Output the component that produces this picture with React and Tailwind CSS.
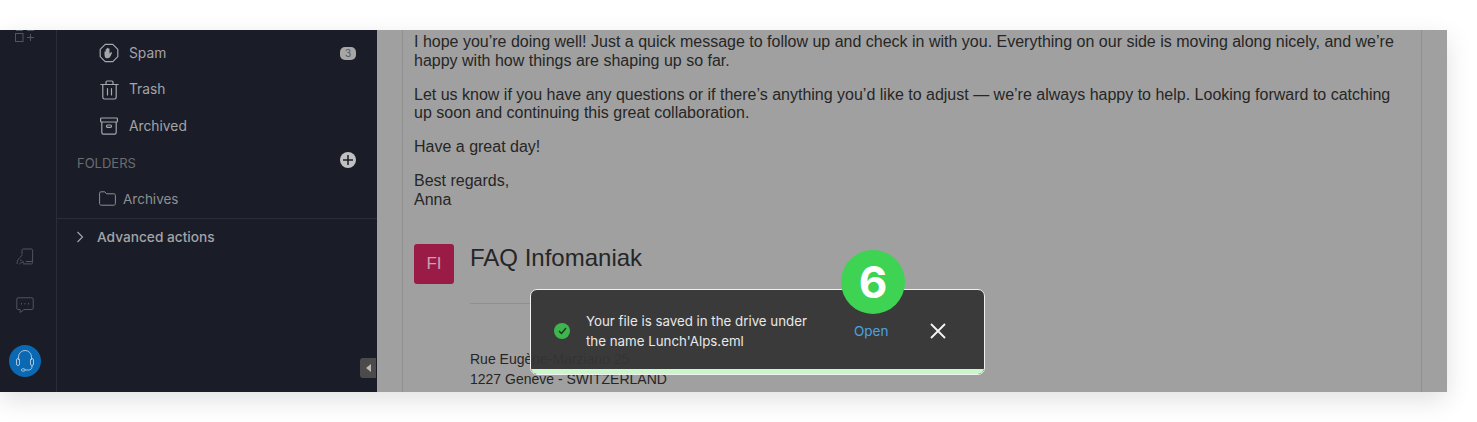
import React from 'react';

const SpamIcon = () => (
    <svg width="20" height="20" viewBox="0 0 20 20" fill="none" stroke="currentColor" strokeWidth="1.200">
        <path d="M6.200 1.300h7.600l5 5v7.400l-5 5H6.200l-5-5V6.300z" strokeLinejoin="round" />
        <path d="M5.500 9c0-.9 1.200-.9 1.200 0v1.500V6.300c0-.9 1.200-.9 1.200 0v3.700V5.400c0-.9 1.300-.9 1.300 0V10V5.800c0-.9 1.300-.9 1.300 0v5l1.100-1.300c.7-.8 1.800-.1 1.300.8l-1.400 3c-.6 1.300-1.500 2-3 2-2.100 0-3-1.500-3-3.400z" fill="currentColor" stroke="none" />
    </svg>
);

const TrashIcon = () => (
    <svg width="19" height="20" viewBox="0 0 19 20" fill="none" stroke="currentColor" strokeWidth="1.200" strokeLinecap="round" strokeLinejoin="round">
        <path d="M.8 4.500h17.400M6 4.500V2.200C6 1.500 6.500 1 7.200 1h4.600c.7 0 1.200.5 1.200 1.200v2.300" />
        <path d="M2.800 4.500v12.800c0 1 .7 1.700 1.700 1.700h10c1 0 1.700-.7 1.700-1.700V4.500" />
        <path d="M7.500 8.500v6.500M11.500 8.500v6.500" />
    </svg>
);

const ArchiveIcon = () => (
    <svg width="18" height="18" viewBox="0 0 18 18" fill="none" stroke="currentColor" strokeWidth="1.200" strokeLinejoin="round">
        <rect x="0.600" y="1" width="16.800" height="4" rx="0.800" />
        <path d="M1.800 5v10.600c0 1 .6 1.600 1.600 1.600h11.200c1 0 1.600-.6 1.600-1.600V5" />
        <rect x="6.500" y="8" width="5" height="2.400" rx="1.200" />
    </svg>
);

const FolderIcon = () => (
    <svg width="17" height="15" viewBox="0 0 17 15" fill="none" stroke="currentColor" strokeWidth="1" strokeLinejoin="round">
        <path d="M.6 2.200C.6 1.300 1.200.8 2 .8h3.800l1.700 2h7.300c.9 0 1.600.6 1.600 1.500v8.300c0 .9-.7 1.600-1.600 1.600H2.200c-.9 0-1.600-.7-1.600-1.600z" />
    </svg>
);

const MenuItem = ({ icon, label, badge }) => (
    <div className="flex items-center h-[36.500px]">
        <div className="w-[72px] flex justify-end pr-[10px] shrink-0 text-[#a6a7ab]">
            <div className="w-5 flex justify-center">{icon}</div>
        </div>
        <span className="text-[13.800px] text-[#a3a4a8]">{label}</span>
        {badge && (
            <span className="ml-auto mr-[21px] w-4 h-[13px] rounded-[5px] bg-[#a6a6a6] text-[#55565c] text-[10px] leading-[13px] text-center">
                {badge}
            </span>
        )}
    </div>
);

const Rail = () => (
    <aside className="w-[57px] shrink-0 border-r border-[#2a2d38] flex flex-col items-center pr-[7px] text-[#4e5661] overflow-hidden">
        <svg className="mt-[-6px]" width="20" height="20" viewBox="0 0 20 20" fill="none" stroke="currentColor" strokeWidth="1">
            <path d="M1 6.500H8M12 6.500h7" />
            <rect x="0.500" y="9.500" width="7.500" height="8" />
            <path d="M12 13.500h7M15.500 10v7" />
        </svg>
        <div className="mt-auto flex flex-col items-center">
            <svg width="18" height="18" viewBox="0 0 18 18" fill="none" stroke="currentColor" strokeWidth="1">
                <path d="M6 6.500V2.200C6 1.500 6.500 1 7.200 1h8.200c.7 0 1.200.5 1.200 1.200v12.500c0 .7-.5 1.200-1.200 1.200H7" />
                <path d="M10 13.500h6.500" />
                <path d="M1 15.500c0-3 1.500-4.500 3-6l2-2.200M3.500 15.800c1-1.300 2.500-1.500 4-1.300-.5-1.500-1.500-2.200-3-2.500" strokeLinecap="round" />
            </svg>
            <svg className="mt-[31px]" width="18" height="17" viewBox="0 0 18 17" fill="none" stroke="currentColor" strokeWidth="1">
                <path d="M2 .8h14c.7 0 1.200.5 1.200 1.200v9.300c0 .7-.5 1.200-1.200 1.200H8l-3.800 3v-3H2c-.7 0-1.200-.5-1.200-1.200V2C.8 1.300 1.300.8 2 .8z" strokeLinejoin="round" />
                <path d="M5 6.700h1M8.500 6.700h1M12 6.700h1" strokeWidth="1.400" />
            </svg>
            <div className="mt-[31px] mb-[15px] w-8 h-8 rounded-full bg-[#0a69b2] flex items-center justify-center">
                <svg width="20" height="24" viewBox="0 0 20 24" fill="none" stroke="#a9c4da" strokeWidth="1">
                    <path d="M3.500 11V8a6.500 6.500 0 0 1 13 0v3" />
                    <rect x="1.500" y="9.500" width="3" height="7" rx="1.500" />
                    <rect x="15.500" y="9.500" width="3" height="7" rx="1.500" />
                    <path d="M17 16.500v1.500c0 1.800-1.500 3-3.500 3H10" />
                    <rect x="6.500" y="19.800" width="3.500" height="2.300" rx="1" />
                </svg>
            </div>
        </div>
    </aside>
);

const Sidebar = () => (
    <nav className="w-[320px] shrink-0 relative flex flex-col">
        <div className="pt-[5px]">
            <MenuItem icon={<SpamIcon />} label="Spam" badge="3" />
            <MenuItem icon={<TrashIcon />} label="Trash" />
            <MenuItem icon={<ArchiveIcon />} label="Archived" />
        </div>
        <div className="flex items-center justify-between h-[37px] pl-5 pr-[21px]">
            <span className="text-[13px] text-[#6b6c70] pt-[2px]">FOLDERS</span>
            <span className="w-4 h-4 mb-[6px] rounded-full bg-[#c0c0c2] flex items-center justify-center">
                <svg width="10" height="10" viewBox="0 0 10 10" stroke="#1a1c27" strokeWidth="1.500"><path d="M5 0v10M0 5h10" /></svg>
            </span>
        </div>
        <div className="flex items-center h-[37.500px] pb-[2px] border-b border-[#2a2d38] pl-[42px] gap-[7px] text-[#8e8f93]">
            <FolderIcon />
            <span className="text-[13.500px]">Archives</span>
        </div>
        <div className="flex items-center h-[36px] pl-[19px] gap-[12px] text-[#a3a4a8]">
            <svg width="9" height="12" viewBox="0 0 9 12" fill="none" stroke="currentColor" strokeWidth="1.200"><path d="M1.500 1l5 5-5 5" /></svg>
            <span className="text-[13.700px] font-medium">Advanced actions</span>
        </div>
        <div className="absolute right-[1px] bottom-[14px] w-4 h-5 rounded-l-[3px] bg-[#4b4b4b] flex items-center justify-center">
            <span className="w-0 h-0 border-y-[4px] border-y-transparent border-r-[5px] border-r-[#b9b9b9]" />
        </div>
    </nav>
);

const Mail = () => (
    <div className="mx-[25px] h-full border-x border-[#8f8f8f] pl-[11px] pr-3 text-[#262626] font-['Liberation_Sans',sans-serif] overflow-hidden">
        <div className="text-[16px] leading-[18.500px] pt-[3px]">
            <p>I hope you’re doing well! Just a quick message to follow up and check in with you. Everything on our side is moving along nicely, and we’re happy with how things are shaping up so far.</p>
            <p className="mt-[15.500px]">Let us know if you have any questions or if there’s anything you’d like to adjust — we’re always happy to help. Looking forward to catching up soon and continuing this great collaboration.</p>
            <p className="mt-[15.500px]">Have a great day!</p>
            <p className="mt-[15.500px]">Best regards,<br />Anna</p>
        </div>
        <div className="flex gap-4 mt-[35px]">
            <div className="w-10 h-10 shrink-0 rounded-[3px] bg-[#9b1b47] text-[#c9a3b1] text-[17px] font-medium flex items-center justify-center">FI</div>
            <div className="flex-1">
                <div className="text-[24px] leading-[28px]">FAQ Infomaniak</div>
                <div className="mt-[31px] w-[300px] border-t border-[#8f8f8f]" />
                <div className="mt-[45px] text-[14px] leading-[20px]">
                    Rue Eugène-Marziano 25<br />1227 Genève - SWITZERLAND
                </div>
            </div>
        </div>
    </div>
);

const Toast = () => (
    <div className="absolute left-[153px] top-[259px] w-[455px] h-[86px] rounded-[7px] border border-[#f0f0f0] bg-[#353535]/95 overflow-hidden font-['Inter',sans-serif]">
        <div className="flex items-center h-[79px] pt-[2px] pl-[23px]">
            <span className="w-4 h-4 rounded-full bg-[#3fb54e] flex items-center justify-center shrink-0">
                <svg width="9" height="8" viewBox="0 0 9 8" fill="none" stroke="#16351c" strokeWidth="1.300"><path d="M1 4l2.500 2.500L8 1" /></svg>
            </span>
            <p className="ml-[16px] w-[240px] text-[13.300px] leading-[20px] text-[#e8e8e8]">
                Your file is saved in the drive under<br />the name Lunch'Alps.eml
            </p>
            <span className="ml-[28px] mt-[2px] text-[13.500px] text-[#4aa3e0]">Open</span>
            <svg className="ml-[42px]" width="16" height="16" viewBox="0 0 16 16" stroke="#f5f5f5" strokeWidth="1.800"><path d="M1 1l14 14M15 1L1 15" /></svg>
        </div>
        <div className="h-[6px] bg-[#c9f7cb]" />
    </div>
);

export default function App() {
    return (
        <div className="h-[422px] bg-white overflow-hidden pt-[30px] font-['Inter',sans-serif]">
            <div className="w-[1447px] h-[362px] flex bg-[#1a1c27] shadow-[0_8px_24px_rgba(0,0,0,0.12)]">
                <Rail />
                <Sidebar />
                <main className="flex-1 relative bg-[#a0a0a0] min-w-0">
                    <Mail />
                    <Toast />
                    <div className="absolute left-[464px] top-[220px] w-16 h-16 rounded-full bg-[#3ed353] text-white text-[44px] font-bold flex items-center justify-center">6</div>
                </main>
            </div>
        </div>
    );
}
